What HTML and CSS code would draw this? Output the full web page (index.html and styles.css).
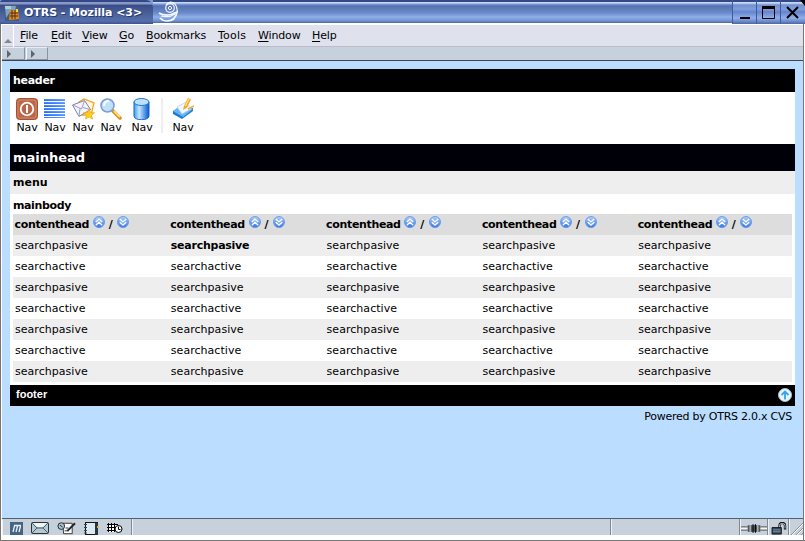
FILE: index.html
```
<!DOCTYPE html>
<html lang="en">
<head>
<meta charset="utf-8">
<title>OTRS</title>
<link rel="stylesheet" href="styles.css">
</head>
<body>
<svg class="defs" width="0" height="0">
  <defs>
    <linearGradient id="gb" x1="0" y1="0" x2="0" y2="1"><stop offset="0" stop-color="#b3d2f8"/><stop offset="1" stop-color="#3475ee"/></linearGradient>
    <linearGradient id="cyl"><stop offset="0" stop-color="#3f9cf0"/><stop offset=".35" stop-color="#c0e6fd"/><stop offset="1" stop-color="#0557cf"/></linearGradient>
    <linearGradient id="stripe" x1="0" y1="1" x2="1" y2="0"><stop offset="0" stop-color="#1c66fa"/><stop offset="1" stop-color="#78acff"/></linearGradient>
  </defs>
  <symbol id="up" viewBox="0 0 12 12"><circle cx="6" cy="6" r="5.5" fill="url(#gb)" stroke="#5c8fe8" stroke-width=".8"/><path d="M2.8 6 6 3.1 9.2 6M2.8 9.2 6 6.3 9.2 9.2" fill="none" stroke="#fff" stroke-width="1.4"/></symbol>
  <symbol id="down" viewBox="0 0 12 12"><circle cx="6" cy="6" r="5.5" fill="url(#gb)" stroke="#5c8fe8" stroke-width=".8"/><path d="M2.8 3 6 5.9 9.2 3M2.8 6.2 6 9.1 9.2 6.2" fill="none" stroke="#fff" stroke-width="1.4"/></symbol>
</svg>
<div class="window">
  <div class="titlebar">
    <div class="caption">
      <svg width="16" height="16" viewBox="0 0 16 16"><path d="M0 0h13l2 2v14H1z" fill="#3d5e80"/><path d="M1 1h11l-1 5-5 1-4 6z" fill="#7fa3bd"/><path d="M2 4V1M4 4V1M6 4V1" stroke="#eef3f8"/><path d="m6 6 8-2 1 10-10 1z" fill="#f08a18"/><path d="M6 8h8M6 11h8M8 5v9M11 5v9" stroke="#493020"/><path d="M12 4h2v3h-2z" fill="#ffd238"/></svg>
      <span>OTRS - Mozilla &lt;3&gt;</span>
    </div>
    <div class="glass">
      <svg width="24" height="22" viewBox="0 0 24 22" fill="none" stroke="#f4f8ff"><circle cx="13" cy="7" r="4.300" stroke-width="1.200"/><circle cx="13" cy="7" r="1.600"/><path d="M2 12c5 3 11 3 18-1-1 6-5 9-10 9-3 0-5-1-7-3" stroke-width="1.600"/><path d="M9 4q4-5 9-1 3 4 2 9M4 15q8 2 14-2" stroke-width="1.200"/></svg>
    </div>
    <div class="winbtn"><svg width="24" height="24"><path d="M7 18h10" stroke="#000" stroke-width="2"/></svg></div>
    <div class="winbtn"><svg width="24" height="24"><path d="M5.500 6v12.500h12V6" fill="none" stroke="#000"/><path d="M5 7.500h13" stroke="#000" stroke-width="3"/></svg></div>
    <div class="winbtn"><svg width="24" height="24"><path d="m6 7 11 11M17 7 6 18" stroke="#000" stroke-width="2"/><path d="M19 0h5v6z" fill="#000"/></svg></div>
  </div>
  <div class="frame">
    <div class="menubar">
      <div class="grip"><svg width="8" height="4"><path d="M4 0 8 4H0z" fill="#808995"/></svg></div>
      <span class="m1"><u>F</u>ile</span><span class="m2"><u>E</u>dit</span><span class="m3"><u>V</u>iew</span><span class="m4"><u>G</u>o</span><span class="m5"><u>B</u>ookmarks</span><span class="m6"><u>T</u>ools</span><span class="m7"><u>W</u>indow</span><span><u>H</u>elp</span>
    </div>
    <div class="toolbar">
      <div class="handle"><svg width="4" height="8"><path d="M0 0 4 4 0 8z" fill="#596572"/></svg></div>
      <div class="handle"><svg width="4" height="8"><path d="M0 0 4 4 0 8z" fill="#596572"/></svg></div>
    </div>
    <main>
      <div class="header">header</div>
      <nav>
        <a class="nav"><svg width="22" height="22"><rect x=".5" y=".5" width="21" height="21" rx="3" fill="#bd6647" stroke="#a65032"/><rect x="2" y="2" width="18" height="18" rx="2" fill="none" stroke="#d18a6f"/><circle cx="11" cy="11" r="6.300" fill="none" stroke="#fff" stroke-width="1.800"/><path d="M11 7v8" stroke="#fff" stroke-width="2"/></svg>Nav</a>
        <a class="nav"><svg width="22" height="22"><g fill="url(#stripe)"><rect x="0" y="1" width="21" height="2"/><rect x="0" y="4" width="21" height="2"/><rect x="0" y="7" width="21" height="2"/><rect x="0" y="10" width="21" height="2"/><rect x="0" y="13" width="21" height="2"/><rect x="0" y="16" width="21" height="2"/><rect x="0" y="19" width="21" height="1"/></g></svg>Nav</a>
        <a class="nav"><svg width="24" height="22" viewBox="0 0 24 22"><path d="m8 4 5-3 10 4-3 12-10 0z" fill="#fff6dc" stroke="#f3a51c" stroke-width="1.300"/><path d="m1.500 7 12-4.500 6 9-11.500 7z" fill="#f4f4ff" stroke="#7f7fae"/><path d="m2 7 8.500 4L13.500 3M8 18l1-7.500M19 11.500l-7-2" fill="none" stroke="#9d9dbf"/><path d="m18 11 1.600 3.500 3.900.3-3 2.500 1 3.700-3.500-2-3.500 2 1-3.700-3-2.500 3.900-.3z" fill="#ffcf22" stroke="#f0a010" stroke-width=".7"/></svg>Nav</a>
        <a class="nav"><svg width="22" height="22"><path d="m13 13 7 7" stroke="#dc911e" stroke-width="3.600" stroke-linecap="round"/><path d="m14 13 6 6" stroke="#ffe080" stroke-width="1.800"/><circle cx="7.500" cy="7.500" r="6.500" fill="#bfe2fa" stroke="#809cd8" stroke-width="1.600"/><path d="M4 8q0-5 5-5" fill="none" stroke="#fff" stroke-width="2"/></svg>Nav</a>
        <a class="nav db"><svg width="22" height="22"><path d="M3 4v14c0 5 15 5 15 0V4z" fill="url(#cyl)" stroke="#1864c7"/><ellipse cx="10.500" cy="4" rx="7.500" ry="3.500" fill="#b9e2fc" stroke="#2471d0"/></svg>Nav</a>
        <i class="sep"></i>
        <a class="nav"><svg width="24" height="22" viewBox="0 0 24 22"><path d="M2 13v3l9 5 11-8v-3z" fill="#1f7bd6"/><path d="m2 13 9-7 11 5-10 8z" fill="#65b7f4"/><path d="m6 9 9-5 5 7-9 5z" fill="#eef6ff" stroke="#b4d0ec" stroke-width=".7"/><path d="m12 12 1-4 4-8 3 1.500-4 8z" fill="#f6a41e"/><path d="m14.500 8 3.500-7" stroke="#ffe38a" stroke-width="1.300"/><path d="m17 11 6-3" stroke="#ebb13d" stroke-width="1.800"/></svg>Nav</a>
      </nav>
      <div class="mainhead">mainhead</div>
      <div class="menu">menu</div>
      <div class="mainbody">mainbody</div>
      <div class="tablewrap">
      <table>
        <thead><tr>
          <th>contenthead <svg><use href="#up"/></svg> / <svg><use href="#down"/></svg></th>
          <th>contenthead <svg><use href="#up"/></svg> / <svg><use href="#down"/></svg></th>
          <th>contenthead <svg><use href="#up"/></svg> / <svg><use href="#down"/></svg></th>
          <th>contenthead <svg><use href="#up"/></svg> / <svg><use href="#down"/></svg></th>
          <th>contenthead <svg><use href="#up"/></svg> / <svg><use href="#down"/></svg></th>
        </tr></thead>
        <tbody>
          <tr class="passive"><td>searchpasive</td><td><b>searchpasive</b></td><td>searchpasive</td><td>searchpasive</td><td>searchpasive</td></tr>
          <tr><td>searchactive</td><td>searchactive</td><td>searchactive</td><td>searchactive</td><td>searchactive</td></tr>
          <tr class="passive"><td>searchpasive</td><td>searchpasive</td><td>searchpasive</td><td>searchpasive</td><td>searchpasive</td></tr>
          <tr><td>searchactive</td><td>searchactive</td><td>searchactive</td><td>searchactive</td><td>searchactive</td></tr>
          <tr class="passive"><td>searchpasive</td><td>searchpasive</td><td>searchpasive</td><td>searchpasive</td><td>searchpasive</td></tr>
          <tr><td>searchactive</td><td>searchactive</td><td>searchactive</td><td>searchactive</td><td>searchactive</td></tr>
          <tr class="passive"><td>searchpasive</td><td>searchpasive</td><td>searchpasive</td><td>searchpasive</td><td>searchpasive</td></tr>
        </tbody>
      </table>
      </div>
      <footer><span>footer</span><svg width="14" height="14"><circle cx="7" cy="7" r="6.500" fill="#e9f5fd" stroke="#a8bdcc"/><path d="M7 11.500V4M3.500 7 7 3.500 10.500 7" fill="none" stroke="#36a2ef" stroke-width="1.800"/></svg></footer>
      <div class="powered">Powered by OTRS 2.0.x CVS</div>
    </main>
    <div class="status">
      <div class="apps">
        <svg width="13" height="13"><path d="M0 0h13v13H0z" fill="#436584"/><path d="M3 10 4.500 4M6 10l1.500-6M9 10l1.500-6M4 3.500h7" fill="none" stroke="#e8f0f6" stroke-width="1.300"/></svg>
        <svg width="18" height="12"><rect x=".5" y=".5" width="17" height="11" rx="1" fill="#b6c8d0" stroke="#26343c"/><path d="m1 1 5 5h6l5-5M1 11l5-5M17 11l-5-5" fill="none" stroke="#4e626c"/><path d="m2 1 4 4h6l4-4z" fill="#edf5f5"/></svg>
        <svg width="19" height="14" viewBox="0 0 20 14"><path d="M6 2h10v11H7z" fill="#fff" stroke="#333"/><circle cx="4.500" cy="5" r="3.500" fill="#adc0d0" stroke="#1b2833"/><path d="m3 4 3 2M8 10h4M9 7h3" stroke="#333"/><path d="m11 10 8-8" stroke="#222" stroke-width="2"/></svg>
        <svg width="15" height="13"><rect x="1.500" y=".5" width="12" height="12" fill="#dce9ef" stroke="#101820"/><path d="M11 1h3v12h-3z" fill="#253746"/><path d="M0 2.500h3M0 5.500h3M0 8.500h3M0 11h3" stroke="#304656"/><path d="M13 4h2v2h-2z" fill="#e5b63d"/></svg>
        <svg width="16" height="12"><path d="M1 2h9v8H1z" fill="#fff"/><path d="M0 2.500h11M0 5.500h8M0 8.500h8M1.500 1v9M4.500 1v9M7.500 1v9" stroke="#000"/><circle cx="11.500" cy="7" r="3.500" fill="#fff" stroke="#000"/><path d="M11.500 4.500v3h2" stroke="#000" fill="none"/></svg>
      </div>
      <div class="message"></div>
      <div class="progress"></div>
      <div class="online"><svg width="26" height="9" viewBox="0 0 27 9"><path d="M0 3h7M0 6h7M20 3h7M20 6h7" stroke="#222"/><path d="M0 4.500h7M20 4.500h7" stroke="#f6f6f1" stroke-width="2"/><path d="M7 1h13v7H7z" fill="#52575a"/><path d="M9.500 1v7M17.500 1v7" stroke="#dde5e8"/><path d="M12.500 0v9M15 0v9" stroke="#000"/></svg></div>
      <div class="lock"><svg width="16" height="13" viewBox="0 0 17 14"><path d="M9 7V4q0-3 3-3t3 3v4" fill="none" stroke="#111" stroke-width="2.500"/><path d="M9 6V4q0-2.500 3-2.500t3 2.500v3" fill="none" stroke="#bcc9d2"/><path d="M1 6h10v7H1z" fill="#344c5d" stroke="#111"/><path d="M2 8.500h8M2 10.500h8" stroke="#7c939f"/></svg></div>
      <div class="resize"><svg width="12" height="14"><path d="M0 14 12 2M5 14l7-7M10 14l2-2" stroke="#87929d"/><path d="M1 14 12 3M6 14l6-6" stroke="#fff"/></svg></div>
    </div>
  </div>
</div>
</body>
</html>
```

FILE: styles.css
```
* { box-sizing: border-box; }
body { margin: 0; font: 11px/14px "DejaVu Sans", sans-serif; color: #000; overflow: hidden; }
svg { display: block; flex: none; }
.defs { position: absolute; }
.window { width: 805px; height: 541px; display: flex; flex-direction: column; background: #fff; border-bottom: 1px solid #777; }
.titlebar { height: 24px; display: flex; flex: none; color: #fff; background: #7b9bdb; }
.caption { width: 153px; display: flex; align-items: center; gap: 4px; padding: 2px 0 0 4px; font-weight: bold; letter-spacing: -.05px; background: linear-gradient(#344887 0 2px, #8999c6 2px 4px, #384d88 5px, #4d639c 15px, #566fae 21px, #3c528d 24px); border-radius: 3px 7px 0 0; text-shadow: 1px 1px #25396c; white-space: nowrap; }
.glass { flex: 1; padding: 1px 0 0 4px; background: linear-gradient(#344887 0 2px, #c5d9f5 2px 3px, #829fd9 4px, #5571b1 6px, #6b8bcb 13px, #8fb0e9 17px, #718fcf 21px, #4c659f 23px, #fff 23px); }
.winbtn { width: 24px; flex: none; border-left: 1px solid #405b9d; background: linear-gradient(#344887 0 2px, #c5d9f5 2px 3px, #718fcf 5px, #819edc 9px, #6684cc 12px, #91afeb 18px, #6582c3 22px, #4c659f 24px); }
.winbtn:last-child { width: 25px; }
.frame { width: 804px; height: 516px; display: flex; flex-direction: column; border-left: 1px solid #777; border-right: 1px solid #777; padding: 0 0 0 1px; }
.menubar { height: 23px; flex: none; display: flex; align-items: center; border-bottom: 1px solid #b8bdc9; border-top: 1px solid #fff; background: #dfe1ed; letter-spacing: -.15px; }
.grip { width: 12px; height: 22px; border-right: 1px solid #fff; margin-right: 6px; padding: 14px 0 0 2px; }
.menubar u { text-underline-offset: 2px; text-decoration-thickness: 1px; text-decoration-skip-ink: none; }
.m1 { width: 31px; } .m2 { width: 31px; } .m3 { width: 37px; } .m4 { width: 27px; } .m5 { width: 72px; } .m6 { width: 40px; letter-spacing: .2px; } .m7 { width: 54px; }
.toolbar { height: 14px; flex: none; display: flex; gap: 1px; background: #c6d1dc; border-bottom: 1px solid #42454b; }
.handle { width: 23px; padding: 2px 0 0 5px; border: solid #8a949e; border-width: 0 1px 1px 0; border-top: 1px solid #e7edf2; }
.handle:nth-child(2) { border-left: 1px solid #f4f7fa; padding-left: 4px; width: 22px; }
main { height: 458px; flex: none; background: #bbddff; padding: 8px 8px 0 8px; border-bottom: 1px solid #54606b; }
.header { height: 23px; padding: 5px 3px; background: #000; color: #fff; font-weight: bold; letter-spacing: -.3px; }
nav { height: 52px; display: flex; padding: 6px 0 0 3px; background: #fff; }
.nav { width: 28px; display: flex; flex-direction: column; align-items: center; gap: 1px; letter-spacing: -.15px; }
.db { margin-left: 3px; }
.sep { width: 2px; height: 35px; background: #eee; margin: 0 6px 0 5px; }
.mainhead { height: 27px; padding: 7px 3px; background: #000008; color: #fff; font-weight: bold; font-size: 13px; }
.menu { height: 23px; padding: 5px 3px; background: #eee; font-weight: bold; }
.mainbody { height: 20px; padding: 5px 3px 0; background: #fff; font-weight: bold; letter-spacing: -.38px; }
.tablewrap { background: #fff; padding: 0 3px 3px; }
table { width: 100%; border-collapse: collapse; table-layout: fixed; }
th, td { height: 21px; padding: 0 2px; text-align: left; white-space: nowrap; }
th { background: #ddd; padding: 0 0 2px 1.500px; letter-spacing: -.34px; word-spacing: .3px; }
th svg { display: inline-block; width: 12px; height: 12px; vertical-align: 0; }
th svg:last-child { margin-left: 1px; }
td b { letter-spacing: -.25px; }
td { letter-spacing: .04px; }
.passive { background: #eee; }
footer { height: 21px; display: flex; justify-content: space-between; padding: 3px 3px 0 6px; background: #000; color: #fff; font: bold 11px/13px "Liberation Sans", sans-serif; }
.powered { text-align: right; padding: 4px 3px 0 0; letter-spacing: -.25px; }
.status { height: 16px; flex: none; display: flex; background: #c6d1dc; }
.status > div { border-right: 1px solid #7f8994; border-left: 1px solid #edf2f6; display: flex; align-items: center; justify-content: center; }
.status > div svg { margin-top: 2px; }
.status .apps { width: 130px; justify-content: flex-start; gap: 8px; padding-left: 7px; }
.status .message { flex: 1; }
.status .progress { width: 129px; }
.status .online { width: 28px; }
.status .lock { width: 21px; }
.status .resize { width: 14px; border-right: 0; }
```
